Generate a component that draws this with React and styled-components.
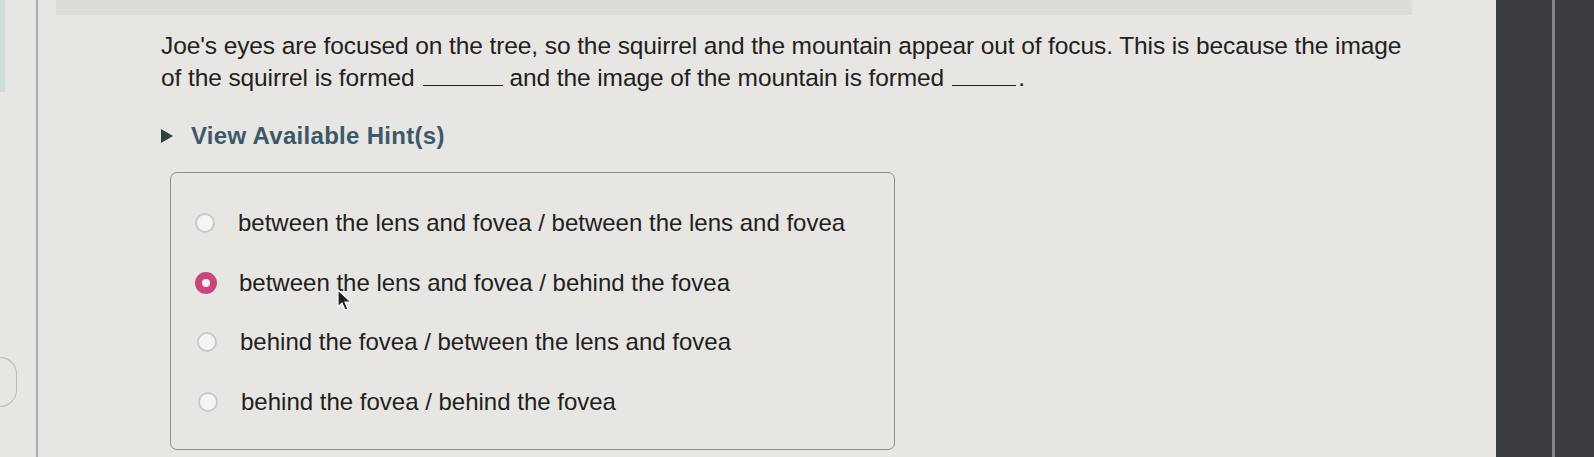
import React from 'react';
import styled, { createGlobalStyle } from 'styled-components';

const GlobalStyle = createGlobalStyle`
  html, body {
    margin: 0;
    padding: 0;
    background: #e7e6e2;
    overflow: hidden;
  }
  body {
    font-family: "Liberation Sans", Arial, sans-serif;
  }
`;

// Layout
const Screen = styled.div`
  display: flex;
  width: 1594px;
  height: 457px;
  background: #e7e6e2;
  position: relative;
  overflow: hidden;
`;

const Gutter = styled.div`
  width: 36px;
  flex: none;
  display: flex;
  flex-direction: column;
  justify-content: space-between;
  border-right: 2px solid #a9aaa9;
`;

const GutterTab = styled.div`
  width: 5px;
  height: 92px;
  background: #cfddd6;
`;

const GutterBadge = styled.div`
  width: 16px;
  height: 48px;
  margin-bottom: 50px;
  border: 1.5px solid #b9b9b6;
  border-left: none;
  border-radius: 0 26px 26px 0;
  box-shadow: 0 18px 0 -16px #b9b9b6;
`;

const Main = styled.div`
  flex: 1;
  display: flex;
  flex-direction: column;
`;

const TopBand = styled.div`
  height: 15px;
  flex: none;
  margin: 0 84px 0 18px;
  background: #dddcd8;
`;

const Content = styled.div`
  padding: 15px 0 0 123px;
  color: #212121;
`;

const Question = styled.p`
  margin: 0;
  font-size: 24.5px;
  line-height: 32px;
  letter-spacing: -0.1px;
`;

const Blank = styled.span`
  display: inline-block;
  width: ${p => p.w}px;
  height: 0;
  border-bottom: 1.5px solid #212121;
  margin: 0 ${p => p.after}px 0 8px;
`;

const HintToggle = styled.div`
  display: flex;
  align-items: center;
  gap: 18px;
  height: 28px;
  margin-top: 28px;
  font-size: 24px;
  font-weight: bold;
  letter-spacing: 0.3px;
  color: #3c5968;
`;

const Caret = styled.span`
  width: 0;
  height: 0;
  border-top: 7px solid transparent;
  border-bottom: 7px solid transparent;
  border-left: 12px solid #2f3d45;
`;

const OptionsBox = styled.div`
  margin: 22px 0 0 9px;
  width: 725px;
  height: 278px;
  box-sizing: border-box;
  border: 1.5px solid #8d8e8c;
  border-radius: 7px;
  padding: 38px 0 0 24px;
  display: flex;
  flex-direction: column;
  gap: 35.5px;
`;

const Option = styled.label`
  display: flex;
  align-items: center;
  gap: 23px;
  height: 24px;
  padding-left: ${p => p.shift}px;
  font-size: 24px;
  color: #212121;
`;

const Radio = styled.span`
  width: ${p => (p.checked ? 22 : 20)}px;
  height: ${p => (p.checked ? 22 : 20)}px;
  margin-left: ${p => (p.checked ? -1 : 0)}px;
  margin-right: ${p => (p.checked ? -1 : 0)}px;
  flex: none;
  box-sizing: border-box;
  border-radius: 50%;
  background: #f4f4f2;
  border: ${p => (p.checked ? '7px solid #c9467a' : '2px solid #c9c9c6')};
`;

const Cursor = styled.svg`
  position: absolute;
  left: 337px;
  top: 289px;
`;

const Bezel = styled.div`
  width: 98px;
  flex: none;
  display: flex;
  background: #3a3c40;
`;

const BezelEdge = styled.div`
  width: 56px;
  border-right: 3px solid #8a8581;
`;

const options = [
  { text: 'between the lens and fovea / between the lens and fovea', shift: 0 },
  { text: 'between the lens and fovea / behind the fovea', shift: 1, checked: true },
  { text: 'behind the fovea / between the lens and fovea', shift: 2 },
  { text: 'behind the fovea / behind the fovea', shift: 3 },
];

const App = () => (
  <Screen>
    <GlobalStyle />
    <Gutter>
      <GutterTab />
      <GutterBadge />
    </Gutter>
    <Main>
      <TopBand />
      <Content>
        <Question>
          Joe's eyes are focused on the tree, so the squirrel and the mountain appear out of focus. This is because the image
          <br />
          of the squirrel is formed<Blank w={80} after={7} />and the image of the mountain is formed<Blank w={64} after={2} />.
        </Question>
        <HintToggle>
          <Caret />
          View Available Hint(s)
        </HintToggle>
        <OptionsBox>
          {options.map(o => (
            <Option key={o.text} shift={o.shift}>
              <Radio checked={o.checked} />
              {o.text}
            </Option>
          ))}
        </OptionsBox>
      </Content>
    </Main>
    <Bezel>
      <BezelEdge />
    </Bezel>
    <Cursor width="16" height="24" viewBox="0 0 16 24">
      <path d="M1 1 L1 18 L5 14 L8 21 L11 20 L8 13 L14 13 Z" fill="#1e1e1e" stroke="#ffffff" strokeWidth="1.2" />
    </Cursor>
  </Screen>
);

export default App;
